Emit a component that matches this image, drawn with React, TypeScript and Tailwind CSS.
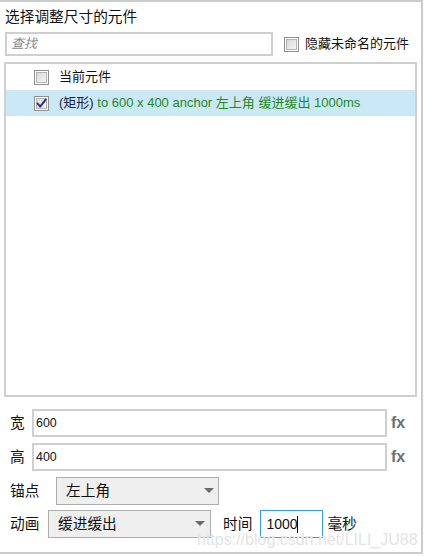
import React from "react";

const FONT = { fontFamily: '"Liberation Sans","Noto Sans CJK SC",sans-serif' };

function Check({ checked }: { checked?: boolean }) {
  return (
    <svg width="15" height="15" viewBox="0 0 15 15" className="shrink-0">
      <defs>
        <linearGradient id={checked ? "gc" : "gu"} x1="0" y1="0" x2="1" y2="1">
          <stop offset="0" stopColor="#d8d8d8" />
          <stop offset="1" stopColor="#f6f6f6" />
        </linearGradient>
      </defs>
      <rect x="0.5" y="0.5" width="14" height="14" fill="#fff" stroke="#8f8f8f" />
      <rect x="2.5" y="2.5" width="10" height="10" fill={`url(#${checked ? "gc" : "gu"})`} stroke="#b4b4b4" />
      {checked && (
        <path d="M3.6 7.6 L6.2 10.6 L11.6 3.6" fill="none" stroke="#2b2f84" strokeWidth="2" strokeLinejoin="round" strokeLinecap="round" />
      )}
    </svg>
  );
}

function Arrow() {
  return (
    <svg width="10" height="6" viewBox="0 0 10 6" className="shrink-0">
      <path d="M0 0 L10 0 L5 5 Z" fill="#6a6a6a" />
    </svg>
  );
}

export default function App() {
  return (
    <div className="w-[424px] h-[556px] bg-white relative text-[#111]" style={FONT}>
      <div className="w-[423px] h-[554px] border-t-2 border-r-2 border-b-2 border-[#cbcbcb] flex flex-col">
        <div className="pl-[5px] pt-[5px] h-[24px] text-[14.7px] leading-[20px] whitespace-nowrap">选择调整尺寸的元件</div>
        <div className="mt-[6px] flex items-center h-[24px]">
          <div className="ml-[5px] w-[268px] h-[24px] border-2 border-[#cfcfcf] flex items-center pl-[4px]">
            <span className="italic text-[#8a8a8a] text-[13px]">查找</span>
          </div>
          <div className="ml-[11px] flex items-center gap-[6px]">
            <Check />
            <span className="text-[13px] leading-[20px] whitespace-nowrap">隐藏未命名的元件</span>
          </div>
        </div>
        <div className="mt-[6px] ml-[4px] w-[413px] h-[335px] border-2 border-[#cfcfcf] flex flex-col">
          <div className="h-[26px] flex items-center pl-[28px] gap-[10px] text-[13px]">
            <Check />
            <span>当前元件</span>
          </div>
          <div className="h-[26px] flex items-center pl-[28px] gap-[10px] text-[13px] bg-[#cbe8f6] whitespace-nowrap">
            <Check checked />
            <span>
              <span className="text-[#1c1c40]">(矩形)</span>
              <span className="text-[#1e8a1e]"> to 600 x 400 anchor 左上角 缓进缓出 1000ms</span>
            </span>
          </div>
        </div>
        <div className="mt-[12px] flex items-center h-[28px]">
          <span className="ml-[10px] w-[22px] text-[14.7px]">宽</span>
          <div className="w-[355px] h-[28px] border-2 border-[#cfcfcf] flex items-center pl-[2px] text-[12.4px]">600</div>
          <span className="ml-[4px] font-bold text-[16px] text-[#707070]">fx</span>
        </div>
        <div className="mt-[6px] flex items-center h-[28px]">
          <span className="ml-[10px] w-[22px] text-[14.7px]">高</span>
          <div className="w-[355px] h-[28px] border-2 border-[#cfcfcf] flex items-center pl-[2px] text-[12.4px]">400</div>
          <span className="ml-[4px] font-bold text-[16px] text-[#707070]">fx</span>
        </div>
        <div className="mt-[6px] flex items-center h-[28px]">
          <span className="ml-[10px] w-[46px] text-[14.7px] whitespace-nowrap">锚点</span>
          <div className="w-[163px] h-[28px] border border-[#adadad] bg-[#efefef] flex items-center justify-between pl-[9px] pr-[4px]">
            <span className="text-[14.7px]">左上角</span>
            <Arrow />
          </div>
        </div>
        <div className="mt-[5px] flex items-center h-[28px]">
          <span className="ml-[10px] w-[38px] text-[14.7px] whitespace-nowrap">动画</span>
          <div className="w-[163px] h-[28px] border border-[#adadad] bg-[#efefef] flex items-center justify-between pl-[9px] pr-[5px]">
            <span className="text-[14.7px]">缓进缓出</span>
            <Arrow />
          </div>
          <span className="ml-[12px] text-[14.7px] whitespace-nowrap">时间</span>
          <div className="ml-[8px] w-[63px] h-[28px] border border-[#3a9fe2] flex items-center pl-[5px] text-[14px]">
            <span>1000</span>
            <span className="w-px h-[17px] bg-black -ml-[1px]"></span>
          </div>
          <span className="ml-[4px] text-[14.7px] whitespace-nowrap">毫秒</span>
        </div>
      </div>
      <div className="absolute left-[197px] top-[528px] text-[16px] text-[#e4e4e4] pointer-events-none whitespace-nowrap" style={{ fontFamily: '"Liberation Sans",sans-serif' }}>
        https://blog.csdn.net/LILI_JU88
      </div>
    </div>
  );
}
